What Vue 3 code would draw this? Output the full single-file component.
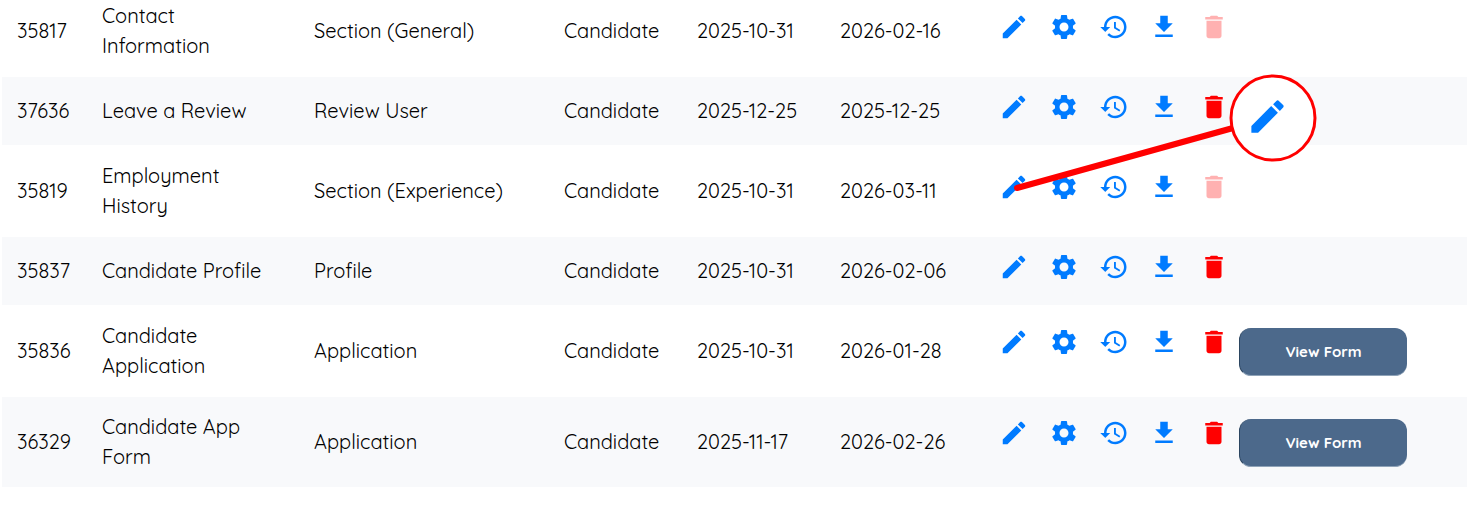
<script setup>
const forms = [
  { id: '35817', name: 'Contact Information', type: 'Section (General)', created: '2025-10-31', modified: '2026-02-16', locked: true },
  { id: '37636', name: 'Leave a Review', type: 'Review User', created: '2025-12-25', modified: '2025-12-25' },
  { id: '35819', name: 'Employment History', type: 'Section (Experience)', created: '2025-10-31', modified: '2026-03-11', locked: true, callout: true },
  { id: '35837', name: 'Candidate Profile', type: 'Profile', created: '2025-10-31', modified: '2026-02-06' },
  { id: '35836', name: 'Candidate Application', type: 'Application', created: '2025-10-31', modified: '2026-01-28', view: true },
  { id: '36329', name: 'Candidate App Form', type: 'Application', created: '2025-11-17', modified: '2026-02-26', view: true },
]

const pencil = 'M3 17.25V21h3.75L17.81 9.94l-3.75-3.75L3 17.25zM20.71 7.04c.39-.39.39-1.02 0-1.41l-2.34-2.34c-.39-.39-1.02-.39-1.41 0l-1.83 1.83 3.75 3.75 1.83-1.83z'

const actions = [
  { label: 'Edit', path: pencil },
  { label: 'Settings', path: 'M19.14 12.94c.04-.3.06-.61.06-.94 0-.32-.02-.64-.07-.94l2.03-1.58c.18-.14.23-.41.12-.61l-1.92-3.32c-.12-.22-.37-.29-.59-.22l-2.39.96c-.5-.38-1.03-.7-1.62-.94l-.36-2.54c-.04-.24-.24-.41-.48-.41h-3.84c-.24 0-.43.17-.47.41l-.36 2.54c-.59.24-1.13.57-1.62.94l-2.39-.96c-.22-.08-.47 0-.59.22L2.74 8.87c-.12.21-.08.47.12.61l2.03 1.58c-.05.3-.09.63-.09.94s.02.64.07.94l-2.03 1.58c-.18.14-.23.41-.12.61l1.92 3.32c.12.22.37.29.59.22l2.39-.96c.5.38 1.03.7 1.62.94l.36 2.54c.05.24.24.41.48.41h3.84c.24 0 .44-.17.47-.41l.36-2.54c.59-.24 1.13-.56 1.62-.94l2.39.96c.22.08.47 0 .59-.22l1.92-3.32c.12-.22.07-.47-.12-.61l-2.01-1.58zM12 15.6c-1.98 0-3.6-1.62-3.6-3.6s1.62-3.6 3.6-3.6 3.6 1.62 3.6 3.6-1.62 3.6-3.6 3.6z' },
  { label: 'History', path: 'M13 3c-4.97 0-9 4.03-9 9H1l3.89 3.89.07.14L9 12H6c0-3.87 3.13-7 7-7s7 3.13 7 7-3.13 7-7 7c-1.93 0-3.68-.79-4.94-2.06l-1.42 1.42C8.27 19.99 10.51 21 13 21c4.97 0 9-4.03 9-9s-4.03-9-9-9zm-1 5v5l4.28 2.54.72-1.21-3.5-2.08V8H12z' },
  { label: 'Download', path: 'M19 9h-4V3H9v6H5l7 7 7-7zM5 18v2h14v-2H5z' },
  { label: 'Delete', path: 'M6 19c0 1.1.9 2 2 2h8c1.1 0 2-.9 2-2V7H6v12zM19 4h-3.5l-1-1h-5l-1 1H5v2h14V4z' },
]
</script>

<template>
  <main class="page">
    <table class="forms">
      <colgroup>
        <col class="col-id" />
        <col class="col-name" />
        <col class="col-type" />
        <col class="col-role" />
        <col class="col-created" />
        <col class="col-modified" />
        <col />
      </colgroup>
      <tbody>
        <tr v-for="form in forms" :key="form.id">
          <td>{{ form.id }}</td>
          <td class="name">{{ form.name }}</td>
          <td>{{ form.type }}</td>
          <td>Candidate</td>
          <td>{{ form.created }}</td>
          <td>{{ form.modified }}</td>
          <td class="tools">
            <div class="actions">
              <button
                v-for="action in actions"
                :key="action.label"
                type="button"
                class="icon"
                :class="{ danger: action.label === 'Delete' }"
                :aria-label="`${action.label} ${form.name}`"
                :disabled="action.label === 'Delete' && form.locked"
              >
                <svg viewBox="0 0 24 24" aria-hidden="true"><path :d="action.path" /></svg>
              </button>
              <button v-if="form.view" type="button" class="view">View Form</button>
              <svg v-if="form.callout" class="callout" viewBox="0 0 320 130" aria-hidden="true">
                <line x1="18" y1="118" x2="234" y2="58" />
                <circle cx="274" cy="48" r="42" />
                <svg x="247" y="25" width="43" height="43" viewBox="0 0 24 24"><path :d="pencil" /></svg>
              </svg>
            </div>
          </td>
        </tr>
      </tbody>
    </table>
  </main>
</template>

<style>
body {
  margin: 0;
  background: #fff;
}
</style>

<style scoped>
.page {
  padding-left: 2px;
  overflow: hidden;
  font-family: Quicksand, Lato, sans-serif;
  font-size: 20px;
  line-height: 30px;
  color: #000;
}
.forms {
  width: 100%;
  table-layout: fixed;
  border-collapse: collapse;
}
.col-id { width: 85px; }
.col-name { width: 212px; }
.col-type { width: 250px; }
.col-role { width: 133px; }
.col-created { width: 143px; }
.col-modified { width: 149px; }
td {
  padding: 16px 0 16px 15px;
  font-weight: 400;
  vertical-align: middle;
}
td.name {
  padding-right: 36px;
}
td.tools {
  padding-top: 15px;
  padding-bottom: 15px;
}
tr:first-child td {
  padding-top: 1px;
}
tr:first-child td.tools {
  padding-top: 0;
}
tr:last-child td {
  padding-top: 15px;
  padding-bottom: 15px;
}
tr:nth-child(even) {
  background: #f8f9fb;
}
.actions {
  position: relative;
  display: flex;
  align-items: flex-start;
  min-height: 38px;
}
button {
  border: 0;
  padding: 0;
  font-family: inherit;
  cursor: pointer;
}
.icon {
  width: 30px;
  height: 30px;
  margin: 0 10px;
  background: none;
  color: #007bff;
}
.icon svg {
  display: block;
  width: 30px;
  height: 30px;
  fill: currentColor;
}
.icon.danger {
  color: #f00;
}
.icon:disabled {
  opacity: 0.3;
}
.view {
  width: 168px;
  height: 48px;
  margin-top: 1px;
  border-left: 1px solid #2b4560;
  border-bottom: 1px solid #8fa3b8;
  border-radius: 12px;
  background: #4c698b;
  color: #fff;
  font-size: 15px;
  font-weight: 700;
}
.callout {
  position: absolute;
  left: 10px;
  top: -102px;
  width: 320px;
  height: 130px;
  pointer-events: none;
}
.callout line {
  stroke: #f00;
  stroke-width: 6;
  stroke-linecap: round;
}
.callout circle {
  fill: #fff;
  stroke: #f00;
  stroke-width: 3;
}
.callout path {
  fill: #007bff;
}
</style>
